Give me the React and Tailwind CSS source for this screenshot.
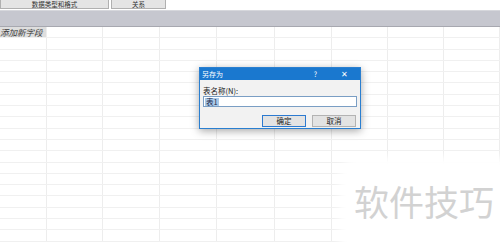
const COLS = [47, 56, 57, 57, 58, 57, 56, 56, 56];
const ROWS = Array.from({ length: 18 });

function GridRow({ header }) {
  return (
    <div className="flex h-[11.3px] border-b border-[#f0f0f0]">
      {COLS.map((w, i) => (
        <div
          key={i}
          className={`shrink-0 border-r border-[#ededed] ${
            header && i === 0 ? "bg-[#dedede]" : ""
          }`}
          style={{ width: w }}
        >
          {header && i === 0 ? (
            <div className="text-[8.5px] leading-[11px] italic text-[#3c3c3c] whitespace-nowrap">
              添加新字段
            </div>
          ) : null}
        </div>
      ))}
    </div>
  );
}

function SaveAsDialog() {
  return (
    <div className="absolute left-[199px] top-[67px] w-[162px] h-[62px] border border-[#2a7fd0] bg-[#f2f2f2] shadow-[0_2px_8px_rgba(0,0,0,0.35)] flex flex-col">
      <div className="h-[12px] bg-[#1a78cf] flex items-center text-white text-[7px] leading-none">
        <span className="ml-[2px]">另存为</span>
        <span className="ml-auto mr-[24px]">?</span>
        <span className="mr-[12px] text-[8px]">✕</span>
      </div>
      <div className="px-[3px] pt-[7px]">
        <div className="text-[7.5px] leading-[8px] text-[#222]">表名称(N):</div>
        <div className="mt-[1px] h-[11px] border border-[#7a9ec4] bg-white flex items-center px-[1px]">
          <span className="bg-[#a9c9e9] text-[7.5px] leading-[8px] text-[#1d2a4a] px-[1px]">表1</span>
        </div>
        <div className="mt-[8px] flex gap-[6px] pl-[59px]">
          <div className="w-[44px] h-[12px] border border-[#2c7ad0] bg-[#e3e3e3] flex items-center justify-center text-[7.5px] text-[#222]">
            确定
          </div>
          <div className="w-[44px] h-[12px] border border-[#b3b3b3] bg-[#e3e3e3] flex items-center justify-center text-[7.5px] text-[#222]">
            取消
          </div>
        </div>
      </div>
    </div>
  );
}

export default function App() {
  return (
    <div
      className="relative w-[500px] h-[242px] overflow-hidden bg-white"
      style={{ fontFamily: '"Noto Sans CJK SC", "Noto Sans", sans-serif' }}
    >
      {/* ribbon remnants */}
      <div className="h-[10px] flex gap-[2px] items-start">
        <div className="w-[109px] h-[9px] border border-t-0 border-[#b0b0b0] bg-[#e4e4e4] flex items-center justify-center text-[6.5px] leading-[7px] text-[#333]">
          数据类型和格式
        </div>
        <div className="w-[55px] h-[9px] border border-t-0 border-[#b0b0b0] bg-[#e4e4e4] flex items-center justify-center text-[6.5px] leading-[7px] text-[#333]">
          关系
        </div>
      </div>
      <div className="h-[17px] bg-[#c6c7cf] border-t border-[#d6d7dc] border-b border-b-[#a7a8b0]" />

      {/* datasheet */}
      <div>
        <GridRow header />
        {ROWS.map((_, i) => (
          <GridRow key={i} />
        ))}
      </div>

      <SaveAsDialog />

      {/* watermark */}
      <div className="absolute left-[348px] top-[165px] right-0 bottom-0 bg-white rounded-tl-[10px] shadow-[0_0_8px_8px_white] flex items-start pl-[6px] pt-[16px]">
        <span className="text-[35px] leading-[40px] text-[#d2d2d2] whitespace-nowrap">软件技巧</span>
      </div>
    </div>
  );
}
